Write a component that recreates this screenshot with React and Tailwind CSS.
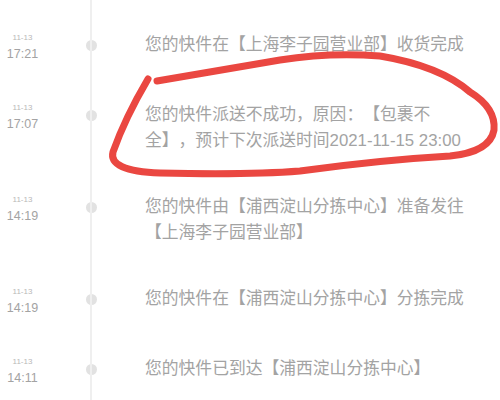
const rows = [
  { date: "11-13", time: "17:21", text: "您的快件在【上海李子园营业部】收货完成" },
  { date: "11-13", time: "17:07", text: "您的快件派送不成功，原因：【包裹不全】，预计下次派送时间2021-11-15 23:00" },
  { date: "11-13", time: "14:19", text: "您的快件由【浦西淀山分拣中心】准备发往【上海李子园营业部】" },
  { date: "11-13", time: "14:19", text: "您的快件在【浦西淀山分拣中心】分拣完成" },
  { date: "11-13", time: "14:11", text: "您的快件已到达【浦西淀山分拣中心】" },
];

export default function App() {
  return (
    <div
      className="relative w-[500px] h-[400px] overflow-hidden bg-white"
      style={{ fontFamily: '"Liberation Sans", "Noto Sans CJK SC", sans-serif' }}
    >
      {/* timeline rail */}
      <div className="absolute left-[90px] top-0 h-full w-[1.5px] bg-[#efefef]" />

      <div className="pt-[32px]">
        {rows.map((r, i) => (
          <div key={i} className="flex items-start pb-[40px]">
            <div className="w-[45px] flex flex-col items-center">
              <div className="mt-[1px] text-[8px] leading-[10px] text-[#b8b8b8]">{r.date}</div>
              <div className="mt-[3px] text-[12.5px] leading-[16px] text-[#a3a3a3]">{r.time}</div>
            </div>
            <div className="w-[92px] flex justify-center">
              <div className="mt-[8px] w-[11px] h-[11px] rounded-full bg-[#e2e2e2]" />
            </div>
            <div className="w-[335px] pl-2 text-[16.8px] leading-[26px] text-[#a3a3a3] [text-spacing-trim:space-all]">
              {r.text}
            </div>
          </div>
        ))}
      </div>

      {/* hand-drawn red annotation */}
      <svg className="absolute left-0 top-0" width="500" height="400" viewBox="0 0 500 400">
        <path
          d="M148,79 Q125,118 113,152 Q108,171 160,173 Q250,175 300,171 Q380,160 450,156 Q490,152 494,130 Q496,108 470,92 Q440,66 380,56 Q330,52 280,60 Q220,70 157,81"
          fill="none"
          stroke="#ea4741"
          strokeWidth="7"
          strokeLinecap="round"
          strokeLinejoin="round"
        />
      </svg>
    </div>
  );
}
